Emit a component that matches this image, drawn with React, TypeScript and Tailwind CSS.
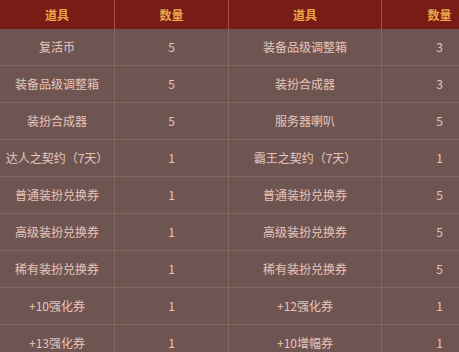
const rows: [string, string, string, string][] = [
    ["复活币", "5", "装备品级调整箱", "3"],
    ["装备品级调整箱", "5", "装扮合成器", "3"],
    ["装扮合成器", "5", "服务器喇叭", "5"],
    ["达人之契约（7天）", "1", "霸王之契约（7天）", "1"],
    ["普通装扮兑换券", "1", "普通装扮兑换券", "5"],
    ["高级装扮兑换券", "1", "高级装扮兑换券", "5"],
    ["稀有装扮兑换券", "1", "稀有装扮兑换券", "5"],
    ["+10强化券", "1", "+12强化券", "1"],
    ["+13强化券", "1", "+10增幅券", "1"],
];

const widths = ["w-[115px]", "w-[114px]", "w-[153px]", "w-[115px]"];

function Cell({ text, index, head }: { text: string; index: number; head?: boolean }) {
    return (
        <div
            className={`${widths[index]} shrink-0 flex items-center justify-center ${
                index < 3 ? (head ? "border-r border-[#a0524a]" : "border-r border-[#8a6560]") : ""
            }`}
        >
            {text}
        </div>
    );
}

export default function App() {
    return (
        <div
            className="w-[459px] h-[352px] overflow-hidden bg-[#6f5551] text-[12px]"
            style={{ fontFamily: '"Noto Sans CJK SC", "Noto Sans", sans-serif' }}
        >
            <div className="w-[497px]">
                <div className="flex h-[29px] bg-[#7a1c16] text-[#eaa64a] font-bold">
                    {["道具", "数量", "道具", "数量"].map((t, i) => (
                        <Cell key={i} text={t} index={i} head />
                    ))}
                </div>
                {rows.map((r, ri) => (
                    <div key={ri} className="flex h-[37px] border-b border-[#8a6560] text-[#e6c5be]">
                        {r.map((t, i) => (
                            <Cell key={i} text={t} index={i} />
                        ))}
                    </div>
                ))}
            </div>
        </div>
    );
}
